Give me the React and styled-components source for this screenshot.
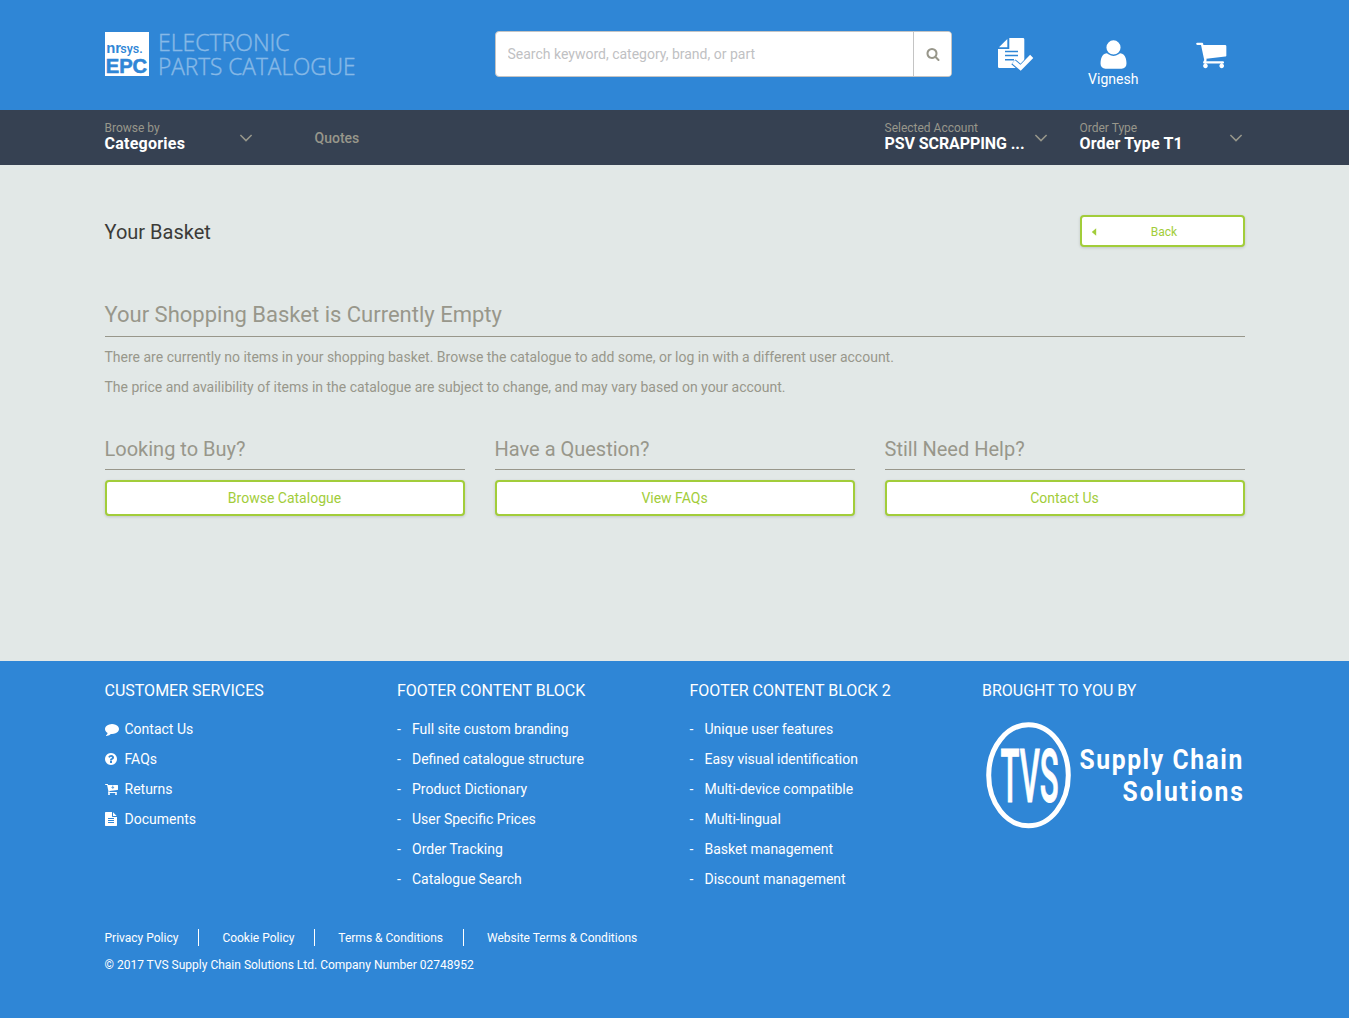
import React from "react";
import styled, { createGlobalStyle } from "styled-components";

const blue = "#2f86d6";
const grey = "#98978b";
const green = "#a2cd3a";

const GlobalStyle = createGlobalStyle`
  * { box-sizing: border-box; }
  body {
    margin: 0;
    background: ${blue};
    font-family: Roboto, "Liberation Sans", sans-serif;
    font-size: 14px;
    line-height: 20px;
    color: ${grey};
  }
  h1, h2, h3, h4, p, ul { margin: 0; padding: 0; font-weight: 400; }
  ul { list-style: none; }
  a { color: inherit; text-decoration: none; }
  svg { display: block; flex: none; overflow: visible; }
`;

const Container = styled.div`
  width: 1140px;
  margin: 0 auto;
`;

const Header = styled.header`
  height: 110px;
  background: ${blue};
`;

const HeaderRow = styled(Container)`
  display: grid;
  grid-template-columns: 390px 457px 1fr;
  padding-top: 31px;
`;

const SearchForm = styled.form`
  display: flex;
  height: 46px;
  background: #fff;
  border: 1px solid #c4c4c4;
  border-radius: 4px;
  overflow: hidden;
`;

const SearchInput = styled.input`
  flex: 1;
  border: 0;
  outline: 0;
  padding: 0 12px;
  font: 14px Roboto, "Liberation Sans", sans-serif;
  background: transparent;
  &::placeholder { color: #bfc1c3; opacity: 1; }
`;

const SearchButton = styled.button`
  width: 38px;
  display: flex;
  align-items: center;
  justify-content: center;
  border: 0;
  border-left: 1px solid #c4c4c4;
  background: #fff;
  color: ${grey};
  padding: 0 0 0 1px;
`;

const HeaderIcons = styled.div`
  display: grid;
  grid-template-columns: 97px 97.5px 97.5px;
  padding-left: 16px;
  color: #fff;
`;

const HeaderLink = styled.a`
  display: flex;
  flex-direction: column;
  align-items: center;
  padding-top: 7px;
  line-height: 16px;
`;

const NavBar = styled.nav`
  height: 55px;
  background: #364152;
`;

const NavRow = styled(Container)`
  display: grid;
  grid-template-columns: 210px 570px 195px 165px;
`;

const NavSelect = styled.div`
  width: ${(p) => p.$width}px;
  display: flex;
  align-items: center;
  justify-content: space-between;
  height: 55px;
`;

const NavLabel = styled.div`
  padding-bottom: 3px;
  font-size: 12px;
  line-height: 14px;
  white-space: nowrap;
  strong {
    display: block;
    font-size: 16px;
    line-height: 17px;
    font-weight: 700;
    letter-spacing: ${(p) => p.$spacing || "0"};
    color: #fff;
  }
`;

const NavLink = styled.a`
  line-height: 57px;
  font-weight: 500;
`;

const Main = styled.main`
  height: 496px;
  background: #e2e8e7;
`;

const TitleRow = styled.div`
  display: flex;
  justify-content: space-between;
  padding-top: 50px;
`;

const PageTitle = styled.h1`
  font-size: 20px;
  line-height: 34px;
  color: #3b3b38;
`;

const Button = styled.a`
  display: grid;
  grid-template-columns: ${(p) => (p.$small ? "10px 1fr 6px" : "1fr")};
  align-items: center;
  width: ${(p) => (p.$small ? "165px" : "auto")};
  height: ${(p) => (p.$small ? 32 : 36)}px;
  padding: ${(p) => (p.$small ? "1px 8px 0" : "0 8px")};
  font-size: ${(p) => (p.$small ? 12 : 14)}px;
  text-align: center;
  color: ${green};
  background: #fff;
  border: 2px solid ${green};
  border-radius: 4px;
  box-shadow: 0 1px 3px rgba(0, 0, 0, 0.15);
`;

const EmptyTitle = styled.h2`
  margin-top: 51px;
  padding-bottom: 6px;
  font-size: 22px;
  line-height: 30px;
  border-bottom: 1px solid ${grey};
`;

const Intro = styled.div`
  padding-top: 5px;
  line-height: 30px;
`;

const HelpGrid = styled.div`
  display: grid;
  grid-template-columns: repeat(3, 360px);
  gap: 30px;
  margin-top: 32px;
`;

const HelpTitle = styled.h3`
  font-size: 20px;
  line-height: 30px;
  height: 36px;
  margin-bottom: 10px;
  border-bottom: 1px solid ${grey};
`;

const Footer = styled.footer`
  height: 357px;
  color: #fff;
`;

const FooterGrid = styled(Container)`
  display: grid;
  grid-template-columns: 292.5px 292.5px 292.5px 1fr;
  padding-top: 20px;
  height: 268px;
`;

const FooterTitle = styled.h4`
  font-size: 16px;
  line-height: 20px;
  margin-bottom: ${(p) => p.$gap || 13}px;
`;

const FooterItem = styled.li`
  display: flex;
  align-items: center;
  height: 30px;
`;

const Marker = styled.span`
  width: ${(p) => p.$width}px;
`;

const Legal = styled(Container)`
  font-size: 12px;
  line-height: 17px;
`;

const LegalLinks = styled.div`
  display: flex;
  margin-bottom: 11px;
`;

const LegalLink = styled.a`
  padding: 2px 20px 0 0;
  line-height: 15px;
  margin-right: 23px;
  border-right: 1px solid #fff;
  &:last-child { border: 0; }
`;

const glyphs = {
  search:
    "M1216 832q0-185-131.5-316.5t-316.5-131.5-316.5 131.5-131.5 316.5 131.5 316.5 316.5 131.5 316.5-131.5 131.5-316.5zm512 832q0 52-38 90t-90 38q-54 0-90-38l-343-342q-179 124-399 124-143 0-273.5-55.5t-225-150-150-225-55.5-273.5 55.5-273.5 150-225 225-150 273.5-55.5 273.5 55.5 225 150 150 225 55.5 273.5q0 220-124 399l343 343q37 37 37 90z",
  user:
    "M1600 1405q0 120-73 189.5t-194 69.5h-874q-121 0-194-69.5t-73-189.5q0-53 3.5-103.5t14-109 26.5-108.5 43-97.5 62-81 85.5-53.5 111.5-20q9 0 42 21.5t74.5 48 108 48 133.5 21.5 133.5-21.5 108-48 74.5-48 42-21.5q61 0 111.5 20t85.5 53.5 62 81 43 97.5 26.5 108.5 14 109 3.5 103.5zm-320-893q0 159-112.5 271.5t-271.5 112.5-271.5-112.5-112.5-271.5 112.5-271.5 271.5-112.5 271.5 112.5 112.5 271.5z",
  cart:
    "M704 1536q0 52-38 90t-90 38-90-38-38-90 38-90 90-38 90 38 38 90zm896 0q0 52-38 90t-90 38-90-38-38-90 38-90 90-38 90 38 38 90zm128-1088v512q0 24-16.5 42.5t-40.5 21.5l-1044 122q13 60 13 70 0 16-24 64h920q26 0 45 19t19 45-19 45-45 19h-1024q-26 0-45-19t-19-45q0-11 8-31.5t16-36 21.5-40 15.5-29.5l-177-823h-204q-26 0-45-19t-19-45 19-45 45-19h256q16 0 28.5 6.5t19.5 15.5 13 24.5 8 26 5.5 29.5 4.5 26h1201q26 0 45 19t19 45z",
  comment:
    "M1792 896q0 174-120 321.5t-326 233-450 85.5q-70 0-145-8-198 175-460 242-49 14-114 22-17 2-30.5-9t-17.5-29v-1q-3-4-.5-12t2-10 4.5-9.5l6-9 7-8.5 8-9q7-8 31-34.5t34.5-38 31-39.5 32.5-51 27-59 26-76q-157-89-247.5-220t-90.5-281q0-130 71-248.5t191-204.5 286-136.5 348-50.5q244 0 450 85.5t326 233 120 321.5z",
  question:
    "M1024 1376v-192q0-14-9-23t-23-9h-192q-14 0-23 9t-9 23v192q0 14 9 23t23 9h192q14 0 23-9t9-23zm256-672q0-88-55.5-163t-138.5-116-170-41q-243 0-371 213-15 24 8 42l132 100q7 6 19 6 16 0 25-12 53-68 86-92 34-24 86-24 48 0 85.5 26t37.5 59q0 38-20 61t-68 45q-63 28-115.5 86.5t-52.5 125.5v36q0 14 9 23t23 9h192q14 0 23-9t9-23q0-19 21.5-49.5t54.5-49.5q32-18 49-28.5t46-35 44.5-48 28-60.5 12.5-81zm384 192q0 209-103 385.5t-279.5 279.5-385.5 103-385.5-103-279.5-279.5-103-385.5 103-385.5 279.5-279.5 385.5-103 385.5 103 279.5 279.5 103 385.5z",
  file:
    "M1596 476q14 14 28 36h-472v-472q22 14 36 28zm-476 164h544v1056q0 40-28 68t-68 28h-1344q-40 0-68-28t-28-68v-1600q0-40 28-68t68-28h800v544q0 40 28 68t68 28zm160 736v-64q0-14-9-23t-23-9h-704q-14 0-23 9t-9 23v64q0 14 9 23t23 9h704q14 0 23-9t9-23zm0-256v-64q0-14-9-23t-23-9h-704q-14 0-23 9t-9 23v64q0 14 9 23t23 9h704q14 0 23-9t9-23zm0-256v-64q0-14-9-23t-23-9h-704q-14 0-23 9t-9 23v64q0 14 9 23t23 9h704q14 0 23-9t9-23z",
};

// The glyphs share a 1792-unit em; x crops the blank left side of narrow ones.
function Glyph({ name, size = 14, x = 0, children }) {
  return (
    <svg width={size} height={size} viewBox={`${x} 0 1792 1792`} fill="currentColor">
      <path d={glyphs[name]} />
      {children}
    </svg>
  );
}

function ReturnCartIcon() {
  return (
    <Glyph name="cart" x={64}>
      <path d="M1060 470v330M900 650l160 160 160-160" fill="none" stroke={blue} strokeWidth="110" />
    </Glyph>
  );
}

function QuoteListIcon() {
  return (
    <svg width="36" height="33" viewBox="0 0 36 33">
      <path d="M1 9.3 9.3 1v8.3z" fill="#fff" />
      <path d="M11.3 0H25a1.3 1.3 0 0 1 1.3 1.3V30H1.2A1.2 1.2 0 0 1 0 28.8V10.9h11.3z" fill="#fff" />
      <path d="M7 13.6h13M7 17.6h13M7 21.7h9" stroke={blue} strokeWidth="1.5" />
      <path d="m15.4 23.8 7.3 6.3L34 18.2" fill="none" stroke={blue} strokeWidth="6.4" />
      <path d="m15.6 23.8 7 6L33.7 18.4" fill="none" stroke="#fff" strokeWidth="4.4" />
    </svg>
  );
}

function Chevron() {
  return (
    <svg width="14" height="8" viewBox="0 0 14 8" fill="none" stroke={grey} strokeWidth="1.5">
      <path d="m1.4 1 5.6 5.6L12.6 1" />
    </svg>
  );
}

function CatalogueLogo() {
  return (
    <svg width="252" height="46" viewBox="0 0 252 46">
      <rect x="0" y="1" width="44" height="44" fill="#fff" />
      <g fill={blue} fontFamily="'Liberation Sans', sans-serif">
        <text x="1.2" y="22.2" fontSize="14" fontWeight="700" textLength="14.8" lengthAdjust="spacingAndGlyphs">nr</text>
        <text x="15.2" y="22.2" fontSize="13" fontFamily="Roboto, sans-serif" fontWeight="500" textLength="22.5" lengthAdjust="spacingAndGlyphs">sys.</text>
        <text x="0.7" y="42.3" fontSize="21" fontWeight="700" stroke={blue} strokeWidth="0.6" textLength="41.5" lengthAdjust="spacingAndGlyphs">EPC</text>
      </g>
      <g fill="#fff" stroke="#fff" strokeWidth="0.35" opacity="0.42" fontFamily="'Open Sans', sans-serif" fontWeight="300" fontSize="24">
        <text x="52.9" y="19.7" textLength="131.8" lengthAdjust="spacingAndGlyphs">ELECTRONIC</text>
        <text x="52.9" y="44.3" textLength="197.6" lengthAdjust="spacingAndGlyphs">PARTS CATALOGUE</text>
      </g>
    </svg>
  );
}

function TvsLogo() {
  return (
    <svg width="262" height="108" viewBox="0 0 262 108" fill="#fff" fontFamily="Roboto, sans-serif" fontWeight="700">
      <ellipse cx="46.5" cy="54.3" rx="39.8" ry="50.5" fill="none" stroke="#fff" strokeWidth="5" />
      <g transform="translate(18.5 81) scale(0.42 1)">
        <text fontSize="74" fontWeight="500" stroke="#fff" strokeWidth="1">TVS</text>
      </g>
      <g fontSize="26.8">
        <g transform="translate(97.5 48.3) scale(0.92 1)">
          <text textLength="177">Supply Chain</text>
        </g>
        <g transform="translate(140.5 80.3) scale(0.92 1)">
          <text textLength="131">Solutions</text>
        </g>
      </g>
    </svg>
  );
}

const services = [
  ["Contact Us", <Glyph name="comment" />],
  ["FAQs", <Glyph name="question" x={128} />],
  ["Returns", <ReturnCartIcon />],
  ["Documents", <Glyph name="file" x={128} />],
];

const blocks = [
  {
    title: "FOOTER CONTENT BLOCK",
    items: [
      "Full site custom branding",
      "Defined catalogue structure",
      "Product Dictionary",
      "User Specific Prices",
      "Order Tracking",
      "Catalogue Search",
    ],
  },
  {
    title: "FOOTER CONTENT BLOCK 2",
    items: [
      "Unique user features",
      "Easy visual identification",
      "Multi-device compatible",
      "Multi-lingual",
      "Basket management",
      "Discount management",
    ],
  },
];

const help = [
  ["Looking to Buy?", "Browse Catalogue"],
  ["Have a Question?", "View FAQs"],
  ["Still Need Help?", "Contact Us"],
];

const legal = ["Privacy Policy", "Cookie Policy", "Terms & Conditions", "Website Terms & Conditions"];

export default function App() {
  return (
    <>
      <GlobalStyle />
      <Header>
        <HeaderRow>
          <CatalogueLogo />
          <SearchForm>
            <SearchInput placeholder="Search keyword, category, brand, or part" />
            <SearchButton type="button" aria-label="Search">
              <Glyph name="search" />
            </SearchButton>
          </SearchForm>
          <HeaderIcons>
            <HeaderLink aria-label="Quotes">
              <QuoteListIcon />
            </HeaderLink>
            <HeaderLink>
              <Glyph name="user" size={33} />
              Vignesh
            </HeaderLink>
            <HeaderLink aria-label="Basket">
              <Glyph name="cart" size={32.5} />
            </HeaderLink>
          </HeaderIcons>
        </HeaderRow>
      </Header>
      <NavBar>
        <NavRow>
          <NavSelect $width={148}>
            <NavLabel $spacing="0.25px">
              Browse by<strong>Categories</strong>
            </NavLabel>
            <Chevron />
          </NavSelect>
          <NavLink>Quotes</NavLink>
          <NavSelect $width={163}>
            <NavLabel $spacing="-0.08px">
              Selected Account<strong>PSV SCRAPPING ...</strong>
            </NavLabel>
            <Chevron />
          </NavSelect>
          <NavSelect $width={163}>
            <NavLabel $spacing="0.14px">
              Order Type<strong>Order Type T1</strong>
            </NavLabel>
            <Chevron />
          </NavSelect>
        </NavRow>
      </NavBar>
      <Main>
        <Container>
          <TitleRow>
            <PageTitle>Your Basket</PageTitle>
            <Button $small>
              <svg width="8" height="8" viewBox="0 0 8 8" fill="currentColor">
                <path d="M6.2 0.2v7.6L1.8 4z" />
              </svg>
              <span>Back</span>
            </Button>
          </TitleRow>
          <EmptyTitle>Your Shopping Basket is Currently Empty</EmptyTitle>
          <Intro>
            <p>There are currently no items in your shopping basket. Browse the catalogue to add some, or log in with a different user account.</p>
            <p>The price and availibility of items in the catalogue are subject to change, and may vary based on your account.</p>
          </Intro>
          <HelpGrid>
            {help.map(([title, action]) => (
              <section key={title}>
                <HelpTitle>{title}</HelpTitle>
                <Button>{action}</Button>
              </section>
            ))}
          </HelpGrid>
        </Container>
      </Main>
      <Footer>
        <FooterGrid>
          <section>
            <FooterTitle>CUSTOMER SERVICES</FooterTitle>
            <ul>
              {services.map(([name, icon]) => (
                <FooterItem key={name}>
                  <Marker $width={20}>{icon}</Marker>
                  {name}
                </FooterItem>
              ))}
            </ul>
          </section>
          {blocks.map((block) => (
            <section key={block.title}>
              <FooterTitle>{block.title}</FooterTitle>
              <ul>
                {block.items.map((item) => (
                  <FooterItem key={item}>
                    <Marker $width={15}>-</Marker>
                    {item}
                  </FooterItem>
                ))}
              </ul>
            </section>
          ))}
          <section>
            <FooterTitle $gap={20}>BROUGHT TO YOU BY</FooterTitle>
            <TvsLogo />
          </section>
        </FooterGrid>
        <Legal>
          <LegalLinks>
            {legal.map((item) => (
              <LegalLink key={item}>{item}</LegalLink>
            ))}
          </LegalLinks>
          <p>© 2017 TVS Supply Chain Solutions Ltd. Company Number 02748952</p>
        </Legal>
      </Footer>
    </>
  );
}
